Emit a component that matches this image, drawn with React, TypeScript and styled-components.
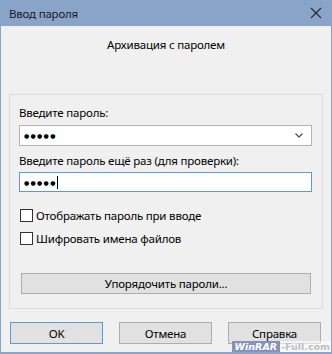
import styled, { createGlobalStyle } from 'styled-components';

const GlobalStyle = createGlobalStyle`
  html, body {
    margin: 0;
    padding: 0;
    background: #ffffff;
  }
  body {
    font-family: "Noto Sans", "DejaVu Sans", sans-serif;
    font-size: 11.5px;
    letter-spacing: -0.2px;
    color: #000000;
  }
`;

const Window = styled.div`
  position: relative;
  width: 332px;
  height: 354px;
  box-sizing: border-box;
  border: 1px solid #8aa4c9;
  border-top: none;
  border-bottom-width: 2px;
  background: #f0f0f0;
  display: flex;
  flex-direction: column;
  overflow: hidden;
`;

const TitleBar = styled.div`
  height: 26px;
  margin: 0 -1px;
  background: #8aa4c9;
  display: flex;
  align-items: center;
  justify-content: space-between;
  padding: 0 10px 0 9px;
`;

const TitleText = styled.span`
  font-size: 11.5px;
  color: #1a1a1a;
`;

const Heading = styled.div`
  margin-top: 11px;
  height: 16px;
  line-height: 16px;
  text-align: center;
  color: #000;
`;

const Body = styled.div`
  padding: 0 8px;
  display: flex;
  flex-direction: column;
`;

const Group = styled.div`
  margin-top: 41px;
  border: 1px solid #dcdcdc;
  padding: 10px 10px 14px 9px;
  display: flex;
  flex-direction: column;
`;

const Label = styled.div<{ $gap?: number }>`
  height: 16px;
  line-height: 16px;
  margin-top: ${p => p.$gap ?? 0}px;
  color: #000;
`;

const Field = styled.div<{ $focused?: boolean; $gap: number; $h: number }>`
  margin-top: ${p => p.$gap}px;
  height: ${p => p.$h}px;
  box-sizing: border-box;
  border: 1px solid ${p => (p.$focused ? '#5a9ad6' : '#b4b4b4')};
  background: #ffffff;
  display: flex;
  align-items: center;
  padding: 0 8px 0 4px;
`;

const Dots = styled.span`
  font-family: "DejaVu Sans", sans-serif;
  font-size: 6px;
  letter-spacing: 1.3px;
  color: #000;
`;

const Caret = styled.span`
  display: inline-block;
  width: 1px;
  height: 13px;
  background: #000;
`;

const Spacer = styled.div`
  flex: 1;
`;

const CheckRow = styled.label<{ $gap: number }>`
  display: flex;
  align-items: center;
  gap: 3px;
  height: 16px;
  margin-top: ${p => p.$gap}px;
  padding-left: 1px;
`;

const Box = styled.span`
  width: 13px;
  height: 13px;
  box-sizing: border-box;
  border: 1px solid #333333;
  background: #ffffff;
`;

const Button = styled.div<{ $default?: boolean }>`
  height: 22px;
  box-sizing: border-box;
  border: 1px solid ${p => (p.$default ? '#5a9ad6' : '#adadad')};
  background: #e1e1e1;
  display: flex;
  align-items: center;
  justify-content: center;
  color: #000;
`;

const WideButton = styled(Button)`
  margin: 27px 1px 0 2px;
  height: 21px;
`;

const ButtonRow = styled.div`
  margin-top: 13px;
  display: grid;
  grid-template-columns: repeat(3, 93px);
  column-gap: 16px;
  padding-left: 1px;
`;

const Watermark = styled.div`
  position: absolute;
  right: 0;
  bottom: 0;
  display: flex;
  align-items: stretch;
  height: 11px;
  font-family: "DejaVu Sans", sans-serif;
  font-weight: bold;
  font-size: 9.5px;
  letter-spacing: 0;
  line-height: 11px;
`;

const MarkBrand = styled.span`
  background: #8593b8;
  color: #ffffff;
  font-style: italic;
  padding: 0 3px;
`;

const MarkSite = styled.span`
  background: rgba(255, 255, 255, 0.6);
  color: #b9bfc9;
  padding: 0 1px;
`;

const CloseIcon = () => (
  <svg width="12" height="12" viewBox="0 0 12 12">
    <path d="M1 1 L11 11 M11 1 L1 11" stroke="#1f2a38" strokeWidth="1.1" fill="none" />
  </svg>
);

const Chevron = () => (
  <svg width="8" height="5" viewBox="0 0 8 5">
    <path d="M0.5 0.5 L4 4 L7.5 0.5" stroke="#555" strokeWidth="1.3" fill="none" />
  </svg>
);

export default function App() {
  return (
    <>
      <GlobalStyle />
      <Window>
        <TitleBar>
          <TitleText>Ввод пароля</TitleText>
          <CloseIcon />
        </TitleBar>
        <Heading>Архивация с паролем</Heading>
        <Body>
          <Group>
            <Label>Введите пароль:</Label>
            <Field $gap={4} $h={21}>
              <Dots>●●●●●</Dots>
              <Spacer />
              <Chevron />
            </Field>
            <Label $gap={7}>Введите пароль ещё раз (для проверки):</Label>
            <Field $gap={3} $h={20} $focused>
              <Dots>●●●●●</Dots>
              <Caret />
            </Field>
            <CheckRow $gap={15}>
              <Box />
              Отображать пароль при вводе
            </CheckRow>
            <CheckRow $gap={7}>
              <Box />
              Шифровать имена файлов
            </CheckRow>
            <WideButton>Упорядочить пароли...</WideButton>
          </Group>
          <ButtonRow>
            <Button $default>OK</Button>
            <Button>Отмена</Button>
            <Button>Справка</Button>
          </ButtonRow>
        </Body>
        <Watermark>
          <MarkBrand>WinRAR</MarkBrand>
          <MarkSite>-Full.com</MarkSite>
        </Watermark>
      </Window>
    </>
  );
}
